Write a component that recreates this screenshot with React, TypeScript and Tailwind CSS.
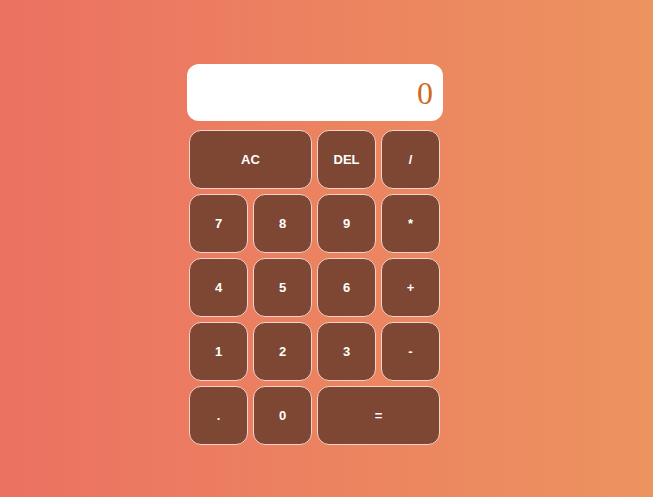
import React from 'react';

const keys: { label: string; span?: boolean }[] = [
    { label: 'AC', span: true },
    { label: 'DEL' },
    { label: '/' },
    { label: '7' },
    { label: '8' },
    { label: '9' },
    { label: '*' },
    { label: '4' },
    { label: '5' },
    { label: '6' },
    { label: '+' },
    { label: '1' },
    { label: '2' },
    { label: '3' },
    { label: '-' },
    { label: '.' },
    { label: '0' },
    { label: '=', span: true },
];

const App: React.FC = () => {
    return (
        <div className="w-[653px] h-[497px] bg-gradient-to-r from-[#eb7161] to-[#ec935f] overflow-hidden">
            <div className="ml-[187px] pt-[64px] w-[256px]">
                {/* Display */}
                <div className="h-[57px] bg-white rounded-[12px] flex items-center justify-end pr-[10px]">
                    <span className="text-[32px] text-[#d2691e]" style={{ fontFamily: '"Liberation Serif", serif' }}>0</span>
                </div>
                {/* Keys */}
                <div className="mt-[9px] ml-[2px] grid grid-cols-[repeat(4,59px)] auto-rows-[59px] gap-[5px]">
                    {keys.map((k) => (
                        <button
                            key={k.label}
                            className={`${k.span ? 'col-span-2' : ''} bg-[#7e4734] border border-[#f3d5cb] rounded-[12px] text-white text-[13px] font-bold flex items-center justify-center`}
                            style={{ fontFamily: '"Liberation Sans", Arial, sans-serif' }}
                        >
                            {k.label}
                        </button>
                    ))}
                </div>
            </div>
        </div>
    );
};

export default App;
